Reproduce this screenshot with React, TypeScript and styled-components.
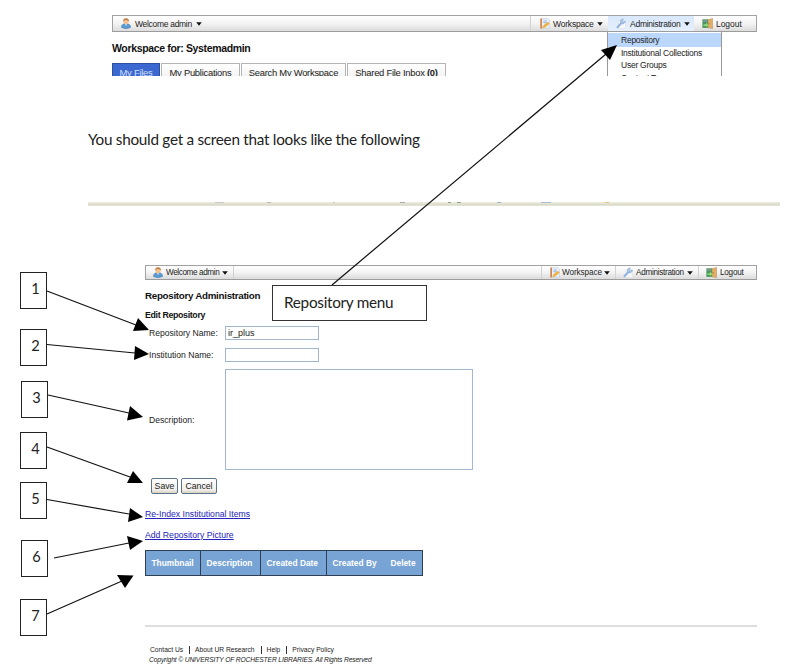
import React from 'react';
import styled, { createGlobalStyle, css } from 'styled-components';

const GlobalStyle = createGlobalStyle`
  * { box-sizing: border-box; }
  html, body { margin: 0; padding: 0; background: #fff; overflow: hidden; }
`;

const Page = styled.main`
  position: relative;
  width: 786px;
  height: 664px;
  overflow: hidden;
  background: #fff;
  color: #222;
  font-family: "Liberation Sans", Arial, sans-serif;
  white-space: nowrap;
`;

/* ---------- toolbar ---------- */

const Bar = styled.nav<{ $height: number }>`
  display: flex;
  height: ${p => p.$height}px;
  border: 1px solid #a2a2a2;
  border-bottom-color: #9c9c9c;
  background: linear-gradient(#fdfdfd 10%, #f3f3f3 50%, #dcdcdc);
`;

const BarItem = styled.div<{ $width: number; $pad: number; $size: number; $gap?: number; $active?: boolean; $divider?: 'left' | 'right' }>`
  display: flex;
  align-items: center;
  gap: ${p => p.$gap ?? 3}px;
  width: ${p => p.$width}px;
  padding-left: ${p => p.$pad}px;
  font-size: ${p => p.$size}px;
  ${p => p.$divider === 'left' && css`border-left: 1px solid #d2d2d2;`}
  ${p => p.$divider === 'right' && css`border-right: 1px solid #d2d2d2;`}
  ${p => p.$active && css`background: linear-gradient(#d9e8fb, #e6f0fd);`}
  svg { flex: none; }
`;

const BarLabel = styled.span<{ $spacing?: number }>`
  letter-spacing: ${p => p.$spacing ?? 0}px;
`;

const Spacer = styled.div`
  flex: 1;
`;

const Caret = () => (
  <svg width="6" height="4" viewBox="0 0 6 4"><path d="M0.2 0.2H5.8L3 3.8Z" fill="#111" /></svg>
);

const UserIcon = () => (
  <svg width="10" height="11" viewBox="0 0 10 11">
    <path d="M0.5 9.6C0.3 6.9 2 5.6 5 5.6s4.7 1.300 4.500 4Q5 11.800 0.500 9.600Z" fill="#5b9bd0" stroke="#3d78ad" strokeWidth=".5" />
    <path d="M3.8 6.2 5 8 6.200 6.200Z" fill="#dcebf6" />
    <circle cx="5" cy="3.8" r="2.5" fill="#f4c193" />
    <path d="M2.200 4C1.900 1.200 3.200.3 5 .3s3.200 1 2.800 3.700C7 2.400 6 2 5 2S2.900 2.600 2.200 4Z" fill="#c07a3c" />
  </svg>
);

const WorkspaceIcon = () => (
  <svg width="10" height="11" viewBox="0 0 10 11">
    <path d="M1.6.7H8L9.4 2.2V10H1.6Z" fill="#eef4fc" stroke="#b9c6da" strokeWidth=".6" />
    <path d="M.3.5H2V10.6H.3Z" fill="#d08350" />
    <path d="M3.3 3H7M3.3 4.7H6.5" stroke="#7fa5dc" strokeWidth=".8" />
    <path d="M2.8 9.9 3.4 7.6 7.9 4.1 9.3 5.7 5 9.2Z" fill="#f0b43c" stroke="#d99a3c" strokeWidth=".4" />
  </svg>
);

const WrenchIcon = () => (
  <svg width="10" height="11" viewBox="0 0 10 11">
    <path d="M2.5 2.8H9.5V10.5H2.5Z" fill="#f6f7fa" stroke="#dadde4" strokeWidth=".5" />
    <path d="M1.5 9.2 5.4 5" stroke="#8fb3dc" strokeWidth="2" strokeLinecap="round" />
    <path d="M4.4 4.3C4 2.3 5.5.7 7.4 1L6.3 2.6 7.5 3.9 9.2 3C9.4 5 7.5 6.6 5.5 5.7Z" fill="#a9c3e4" stroke="#7fa2cf" strokeWidth=".5" />
  </svg>
);

const LogoutIcon = () => (
  <svg width="11" height="11" viewBox="0 0 11 11">
    <path d="M.4 1.3H6.2V9.9H.4Z" fill="#4b9457" />
    <path d="M1.2 2H5V4H1.2Z" fill="#78989c" />
    <path d="M6 1.8 10.5.4V10.6L6 9.8Z" fill="#dfae69" stroke="#b98a4e" strokeWidth=".5" />
    <path d="M1.500 6.200H4V4.600L6.400 7 4 9.200V7.900H1.500Z" fill="#8fdb79" />
    <path d="M7.1 5.2V6.4" stroke="#865420" strokeWidth=".7" />
  </svg>
);

/* ---------- workspace capture ---------- */

const WorkspaceShot = styled.section`
  position: relative;
  height: 76px;
  width: 757px;
  padding: 15px 0 0 112px;
  overflow: hidden;
`;

const WorkspaceTitle = styled.h1`
  height: 31px;
  margin: 0;
  font-size: 10.5px;
  line-height: 33px;
  letter-spacing: -0.35px;
  color: #111;
`;

const Tabs = styled.div`
  display: flex;
  gap: 1px;
  height: 20px;
`;

const Tab = styled.div<{ $width: number; $active?: boolean }>`
  width: ${p => p.$width}px;
  border: 1px solid #b4b4b4;
  background: linear-gradient(#fff, #eee);
  font-size: 9.4px;
  letter-spacing: -0.25px;
  line-height: 18px;
  text-align: center;
  ${p => p.$active && css`
    border-color: #2d4f9e;
    background: #3b68d0;
    color: #d5e0f7;
  `}
`;

const Menu = styled.div`
  position: absolute;
  left: 607px;
  top: 32px;
  width: 115px;
  height: 60px;
  padding-top: 1px;
  border: solid #999;
  border-width: 0 1px;
  background: #fff;
`;

const MenuItem = styled.div<{ $active?: boolean }>`
  height: 12.3px;
  padding-left: 13px;
  font-size: 8.5px;
  line-height: 13px;
  letter-spacing: -0.24px;
  ${p => p.$active && css`
    height: 14px;
    line-height: 15px;
    background: #bbd8fc;
  `}
`;

/* ---------- document text ---------- */

const Paragraph = styled.p`
  height: 126px;
  margin: 0;
  padding: 53px 0 0 88px;
  font: 15.3px/20px Lato, "Open Sans", sans-serif;
  letter-spacing: -0.28px;
  color: #222;
`;

const Strip = styled.div`
  display: flex;
  width: 692px;
  height: 4px;
  margin-left: 88px;
  background: linear-gradient(#f0eee2, #dcdccb 60%, #e6e6da);
`;

const StripMark = styled.i<{ $offset: number; $width: number; $color: string }>`
  width: ${p => p.$width}px;
  height: 1px;
  margin-left: ${p => p.$offset}px;
  background: ${p => p.$color};
`;

/* ---------- repository form capture ---------- */

const RepositoryShot = styled.section`
  width: 612px;
  margin: 59px 0 0 145px;
`;

const Heading = styled.h2`
  height: 25px;
  margin: 0;
  font-size: 9.8px;
  line-height: 32px;
  letter-spacing: -0.3px;
  color: #111;
`;

const SubHeading = styled.h3`
  height: 21px;
  margin: 0;
  font-size: 8.8px;
  line-height: 20px;
  letter-spacing: -0.33px;
  color: #111;
`;

const FormRow = styled.div<{ $height: number; $gap: number }>`
  display: grid;
  grid-template-columns: 76px 1fr;
  align-items: center;
  height: ${p => p.$height}px;
  margin-bottom: ${p => p.$gap}px;
  padding-left: 4px;
  font-size: 8.6px;
`;

const Field = styled.div<{ $width: number }>`
  width: ${p => p.$width}px;
  height: 100%;
  padding-left: 2px;
  border: 1px solid #a3b8cc;
  line-height: 12px;
  font-size: 9px;
`;

const Buttons = styled.div`
  display: flex;
  gap: 3px;
  height: 27px;
  padding-left: 6px;
`;

const Button = styled.button<{ $width: number }>`
  width: ${p => p.$width}px;
  height: 16px;
  padding: 0;
  border: 1px solid #5d7388;
  border-radius: 2px;
  background: linear-gradient(#fff, #f1f0ea 75%, #d8d2c4);
  color: #222;
  font: 8.7px/13px "Liberation Sans", Arial, sans-serif;
`;

const LinkLine = styled.div`
  height: 20.5px;
  font-size: 8.68px;
  line-height: 19px;
  color: #2323bd;
  text-decoration: underline;
`;

const TableHead = styled.div`
  display: flex;
  width: 278px;
  height: 26px;
  margin-top: 4px;
  border: 1px solid #2f4053;
  background: #77a4d5;
  color: #fff;
  font-size: 8.35px;
  font-weight: bold;
  line-height: 24px;
`;

const TableCell = styled.div<{ $width: number; $last?: boolean }>`
  width: ${p => p.$width}px;
  padding-left: 5.5px;
  ${p => !p.$last && css`border-right: 1px solid #2f4053;`}
`;

const Footer = styled.footer`
  margin-top: 49px;
  padding: 18px 0 0 5px;
  border-top: 2px solid #dedede;
  color: #222;
`;

const FooterLinks = styled.div`
  display: flex;
  align-items: center;
  height: 10px;
  font-size: 6.7px;
`;

const FooterLink = styled.span<{ $first?: boolean }>`
  line-height: 8px;
  ${p => !p.$first && css`
    margin-left: 6px;
    padding-left: 5px;
    border-left: 1px solid #333;
  `}
`;

const Copyright = styled.div`
  height: 10px;
  margin-left: -1px;
  font-size: 6.7px;
  font-style: italic;
  line-height: 10px;
  letter-spacing: -0.13px;
`;

/* ---------- annotations over the captures ---------- */

const Arrows = styled.svg`
  position: absolute;
  left: 0;
  top: 0;
`;

const Note = styled.div<{ $x: number; $y: number }>`
  position: absolute;
  left: ${p => p.$x}px;
  top: ${p => p.$y}px;
  width: 27px;
  height: 37px;
  padding-left: 4px;
  border: 1px solid #222;
  background: #fff;
  font: 14.6px/32px Lato, "Open Sans", sans-serif;
  text-align: center;
`;

const Callout = styled.div`
  position: absolute;
  left: 272px;
  top: 285px;
  width: 155px;
  height: 36px;
  padding-left: 11px;
  border: 1px solid #333;
  background: #fff;
  font: 15.3px/32px Lato, "Open Sans", sans-serif;
  letter-spacing: -0.28px;
`;

const notes = [
  { x: 20, y: 272 }, { x: 20, y: 329 }, { x: 21, y: 381 }, { x: 20, y: 432 },
  { x: 20, y: 482 }, { x: 21, y: 540 }, { x: 20, y: 599 },
];

const arrows = [
  { line: 'M332 285 606 54', head: '617,45 601,50 610,60' },
  { line: 'M47 291 136 325', head: '149,330 138,318 133,331' },
  { line: 'M47 344.5 135 353', head: '149,354 135,346 134,360' },
  { line: 'M48 395 129 413', head: '143,417 130,406 127,420.5' },
  { line: 'M47 447 130 477', head: '143,483 133,471 127,483' },
  { line: 'M47 499.5 129 514', head: '143,517 130,508 128,522' },
  { line: 'M54 558 129 543', head: '143,541 127,536 130,550' },
  { line: 'M47 614 122 581', head: '133.5,575.5 117,575 125,588' },
];

const stripMarks = [
  { offset: 127, width: 9, color: '#c9c9c9' }, { offset: 43, width: 4, color: '#bbb' },
  { offset: 62, width: 2, color: '#c9c9c9' }, { offset: 65, width: 5, color: '#aaa' },
  { offset: 43, width: 3, color: '#8aa58c' }, { offset: 6, width: 4, color: '#8aa58c' },
  { offset: 36, width: 4, color: '#9eb3c9' }, { offset: 40, width: 10, color: '#a6bcd8' },
  { offset: 54, width: 4, color: '#e2c37c' },
];

export default function App() {
  return (
    <>
      <GlobalStyle />
      <Page>
        <WorkspaceShot>
          <Bar $height={17}>
            <BarItem $width={110} $pad={8} $size={8.5} $gap={4}>
              <UserIcon /><BarLabel $spacing={-0.3}>Welcome admin</BarLabel><Caret />
            </BarItem>
            <Spacer />
            <BarItem $width={78} $pad={9} $size={8.5} $divider="left">
              <WorkspaceIcon /><BarLabel $spacing={-0.2}>Workspace</BarLabel><Caret />
            </BarItem>
            <BarItem $width={86} $pad={8} $size={8.5} $gap={4} $active>
              <WrenchIcon /><BarLabel $spacing={-0.25}>Administration</BarLabel><Caret />
            </BarItem>
            <BarItem $width={62} $pad={8} $size={8.5}>
              <LogoutIcon /><BarLabel $spacing={-0.05}>Logout</BarLabel>
            </BarItem>
          </Bar>
          <WorkspaceTitle>Workspace for: Systemadmin</WorkspaceTitle>
          <Tabs>
            <Tab $width={48} $active>My Files</Tab>
            <Tab $width={79}>My Publications</Tab>
            <Tab $width={105}>Search My Workspace</Tab>
            <Tab $width={99}>Shared File Inbox <b>(0)</b></Tab>
          </Tabs>
          <Menu>
            <MenuItem $active>Repository</MenuItem>
            <MenuItem>Institutional Collections</MenuItem>
            <MenuItem>User Groups</MenuItem>
            <MenuItem>Content Types</MenuItem>
          </Menu>
        </WorkspaceShot>

        <Paragraph>You should get a screen that looks like the following</Paragraph>
        <Strip>
          {stripMarks.map((m, i) => (
            <StripMark key={i} $offset={m.offset} $width={m.width} $color={m.color} />
          ))}
        </Strip>

        <RepositoryShot>
          <Bar $height={15}>
            <BarItem $width={88} $pad={7} $size={8.2} $divider="right">
              <UserIcon /><BarLabel $spacing={-0.4}>Welcome admin</BarLabel><Caret />
            </BarItem>
            <Spacer />
            <BarItem $width={74} $pad={8} $size={8.2} $gap={2} $divider="left">
              <WorkspaceIcon /><BarLabel $spacing={-0.1}>Workspace</BarLabel><Caret />
            </BarItem>
            <BarItem $width={83} $pad={7} $size={8.2} $divider="left">
              <WrenchIcon /><BarLabel $spacing={-0.3}>Administration</BarLabel><Caret />
            </BarItem>
            <BarItem $width={58} $pad={7} $size={8.2} $divider="left">
              <LogoutIcon /><BarLabel $spacing={-0.25}>Logout</BarLabel>
            </BarItem>
          </Bar>
          <Heading>Repository Administration</Heading>
          <SubHeading>Edit Repository</SubHeading>
          <FormRow $height={14} $gap={8}>
            <span>Repository Name:</span><Field $width={94}>ir_plus</Field>
          </FormRow>
          <FormRow $height={14} $gap={7}>
            <span>Institution Name:</span><Field $width={94} />
          </FormRow>
          <FormRow $height={101} $gap={8}>
            <span>Description:</span><Field $width={248} />
          </FormRow>
          <Buttons>
            <Button $width={27}>Save</Button>
            <Button $width={36}>Cancel</Button>
          </Buttons>
          <LinkLine>Re-Index Institutional Items</LinkLine>
          <LinkLine>Add Repository Picture</LinkLine>
          <TableHead>
            <TableCell $width={55}>Thumbnail</TableCell>
            <TableCell $width={60}>Description</TableCell>
            <TableCell $width={66}>Created Date</TableCell>
            <TableCell $width={58} $last>Created By</TableCell>
            <TableCell $width={37} $last>Delete</TableCell>
          </TableHead>
          <Footer>
            <FooterLinks>
              <FooterLink $first>Contact Us</FooterLink>
              <FooterLink>About UR Research</FooterLink>
              <FooterLink>Help</FooterLink>
              <FooterLink>Privacy Policy</FooterLink>
            </FooterLinks>
            <Copyright>Copyright © UNIVERSITY OF ROCHESTER LIBRARIES. All Rights Reserved</Copyright>
          </Footer>
        </RepositoryShot>

        {notes.map((n, i) => (
          <Note key={i} $x={n.x} $y={n.y}>{i + 1}</Note>
        ))}
        <Callout>Repository menu</Callout>
        <Arrows width="786" height="664" viewBox="0 0 786 664">
          {arrows.map((a, i) => (
            <g key={i}>
              <path d={a.line} stroke="#111" strokeWidth="1.2" fill="none" />
              <polygon points={a.head} fill="#000" />
            </g>
          ))}
        </Arrows>
      </Page>
    </>
  );
}
